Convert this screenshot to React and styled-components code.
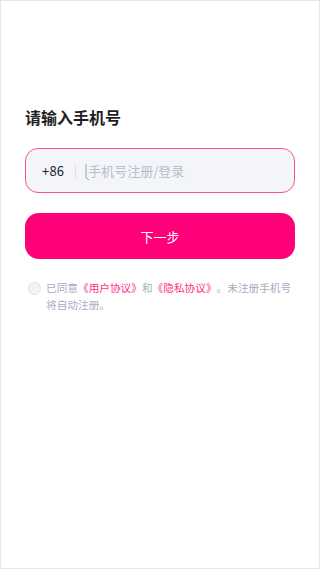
import React from 'react';
import styled, { createGlobalStyle } from 'styled-components';

const GlobalStyle = createGlobalStyle`
  html, body {
    margin: 0;
    padding: 0;
    background: #fff;
  }
  * {
    box-sizing: border-box;
  }
  body {
    font-family: "Noto Sans CJK SC", "Noto Sans", sans-serif;
  }
`;

const Page = styled.div`
  min-height: 569px;
  border: 1px solid #e6e6e6;
  padding: 105px 24px 0;
  background: #fff;
`;

const Title = styled.h1`
  margin: 0;
  font-size: 16px;
  line-height: 22px;
  font-weight: 700;
  color: #1f1f1f;
`;

const PhoneField = styled.div`
  position: relative;
  display: flex;
  align-items: center;
  height: 45px;
  margin-top: 20px;
  padding: 0 16px;
  background: #f3f5f8;
  border: 1px solid #ff4f9c;
  border-radius: 13px;
`;

const Prefix = styled.span`
  font-size: 13px;
  color: #1d2233;
  letter-spacing: 0.2px;
`;

const Divider = styled.span`
  width: 1px;
  height: 14px;
  margin: 0 12px 0 11px;
  background: #dcdfe7;
`;

const PhoneInput = styled.input`
  flex: 1;
  min-width: 0;
  border: none;
  outline: none;
  background: transparent;
  font-family: inherit;
  font-size: 13px;
  color: #1d2233;
  padding: 0;
  &::placeholder {
    color: #b8bccd;
  }
`;

const Cursor = styled.svg`
  position: absolute;
  left: 59px;
  top: 14px;
  pointer-events: none;
`;

const NextButton = styled.button`
  display: block;
  width: 100%;
  height: 46px;
  margin-top: 20px;
  border: none;
  border-radius: 14px;
  background: #ff0078;
  color: #fff;
  font-family: inherit;
  font-size: 13px;
  cursor: pointer;
`;

const Agreement = styled.div`
  display: flex;
  align-items: flex-start;
  margin-top: 21px;
  padding-left: 3px;
`;

const Radio = styled.span`
  flex: none;
  width: 13px;
  height: 13px;
  margin-top: 2px;
  margin-right: 5px;
  border-radius: 50%;
  border: 1px solid #dde0e8;
  background: #f1f3f7;
`;

const AgreeText = styled.p`
  margin: 0;
  font-size: 10.67px;
  line-height: 16.5px;
  color: #a9adc2;
  text-spacing-trim: space-all;
`;

const Link = styled.span`
  color: #ff2e89;
`;

export default function App() {
  return (
    <>
      <GlobalStyle />
      <Page>
        <Title>请输入手机号</Title>
        <PhoneField>
          <Prefix>+86</Prefix>
          <Divider />
          <PhoneInput type="tel" placeholder="手机号注册/登录" />
          <Cursor width="7" height="18" viewBox="0 0 7 18">
            <path d="M1 1 L1 15 L4 17" fill="none" stroke="#9aa0b2" strokeWidth="1" />
          </Cursor>
        </PhoneField>
        <NextButton>下一步</NextButton>
        <Agreement>
          <Radio />
          <AgreeText>
            已同意<Link>《用户协议》</Link>和<Link>《隐私协议》</Link>。未注册手机号将自动注册。
          </AgreeText>
        </Agreement>
      </Page>
    </>
  );
}
